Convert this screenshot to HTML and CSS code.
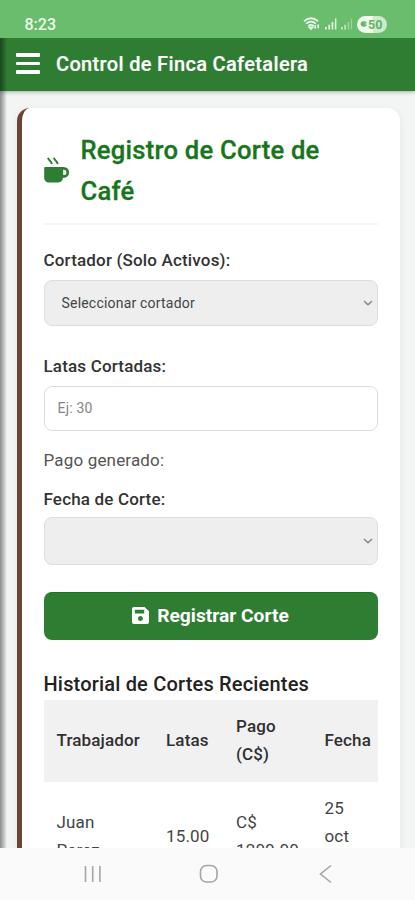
FILE: index.html
```html
<!DOCTYPE html>
<html lang="es">
<head>
<meta charset="utf-8">
<meta name="viewport" content="width=device-width, initial-scale=1">
<title>Control de Finca Cafetalera</title>
<link rel="stylesheet" href="styles.css">
</head>
<body>
<div class="phone">
  <div class="status">
    <span class="clock">8:23</span>
    <div class="status-icons">
      <svg class="wifi" width="18" height="14" viewBox="0 0 18 14" fill="none" stroke="#e9f8e6" stroke-width="1.8">
        <path d="M1 4.2Q8 -1.6 15 4.2M3.2 6.6Q8 2.6 12.8 6.6M5.4 9Q8 6.8 10.6 9"/><path d="M6.5 10.3L8 12L9.5 10.3Z" fill="#e9f8e6"/><path d="M12.2 11.8V8M15.2 7.5V11.3" stroke-width="1.7"/>
      </svg>
      <svg class="signal" width="12" height="12" viewBox="0 0 12 12" fill="#e3f5df"><path d="M0 9h1.7v2.5H0zM3.3 6.8H5v4.7H3.3zM6.6 4h1.7v7.5H6.6zM9.9 .5h1.5v11H9.9z"/></svg>
      <svg class="signal" width="12" height="12" viewBox="0 0 12 12" fill="#c5e8c1"><path d="M0 9h1.7v2.5H0zM3.3 6.8H5v4.7H3.3z"/><path d="M6.6 4h1.7v7.5H6.6zM9.9 .5h1.2v11H9.9z" opacity=".55"/></svg>
      <div class="battery"><svg width="7" height="8" viewBox="0 0 7 8"><path d="M3 1.2h2.5v1H7v1H5.5v1.5H7v1H5.5v1H3Q.5 6.2 .5 4T3 1.2z" fill="#67b76a"/></svg><span>50</span></div>
    </div>
  </div>
  <div class="app">
    <header class="topbar">
      <div class="menu"><i></i><i></i><i></i></div>
      <span class="brand">Control de Finca Cafetalera</span>
    </header>
    <main class="content">
      <section class="card">
        <div class="heading">
          <svg width="27" height="27" viewBox="0 0 27 27"><path d="M1 10h18.7a5.4 5.4 0 0 1 0 10.8h-.8a4.7 4.7 0 0 1-4.5 4.8H5A4.6 4.6 0 0 1 .2 21V10.8Q.2 10 1 10zM19.2 12.7v5.4h.5a2.7 2.7 0 0 0 0-5.4z" fill="#2e7d32" fill-rule="evenodd"/><path d="M4 .8Q4.3 2.4 5.9 3.7T7.8 7.2M9.9 .8Q10.2 2.4 11.8 3.7T13.7 7.2" fill="none" stroke="#2e7d32" stroke-width="1.9"/></svg>
          <h1>Registro de Corte de<br>Café</h1>
        </div>
        <form class="form">
          <label class="l-cortador">Cortador (Solo Activos):</label>
          <div class="field select"><span class="choice">Seleccionar cortador</span><svg width="10" height="6" viewBox="0 0 10 6"><path d="M1 1l4 3.7L9 1"/></svg></div>
          <label class="l-latas">Latas Cortadas:</label>
          <div class="field input"><span class="hint">Ej: 30</span></div>
          <p class="pay">Pago generado:</p>
          <label class="l-fecha">Fecha de Corte:</label>
          <div class="field select date"><svg width="10" height="6" viewBox="0 0 10 6"><path d="M1 1l4 3.7L9 1"/></svg></div>
          <div class="submit" role="button">
            <svg width="17" height="17" viewBox="0 0 17 17"><path fill="#fff" fill-rule="evenodd" d="M2 0h10.5L17 4.3V15a2 2 0 0 1-2 2H2a2 2 0 0 1-2-2V2a2 2 0 0 1 2-2zM2.8 2.8v3.7h9.4V2.8zM8.5 9a2.5 2.5 0 1 0 0 5 2.5 2.5 0 0 0 0-5z"/></svg>
            <span>Registrar Corte</span>
          </div>
        </form>
        <h2>Historial de Cortes Recientes</h2>
        <div class="table">
          <div class="row head"><span>Trabajador</span><span>Latas</span><span>Pago<br>(C$)</span><span>Fecha</span></div>
          <div class="row"><span>Juan<br>Perez</span><span>15.00</span><span>C$<br>1200.00</span><span class="when">25<br>oct</span></div>
        </div>
      </section>
    </main>
  </div>
  <nav class="navbar">
    <svg width="18" height="18" viewBox="0 0 18 18"><path d="M1.5 1v16M8.7 1v16M15.9 1v16"/></svg>
    <svg width="20" height="20" viewBox="0 0 20 20"><rect x="1.5" y="1.5" width="16.5" height="16.5" rx="6"/></svg>
    <svg width="13" height="20" viewBox="0 0 13 20"><path d="M12 1.5L1.5 10L12 18.5"/></svg>
  </nav>
</div>
</body>
</html>
```
FILE: styles.css
```css
* { box-sizing: border-box; }
body { margin: 0; font-family: Roboto, "Liberation Sans", sans-serif; color: #333; background: #f3f5f5; }
h1, h2, p { margin: 0; }
.phone { width: 415px; height: 900px; display: flex; flex-direction: column; overflow: hidden; }
.status { height: 38px; flex: none; background: #69bd6d; display: flex; justify-content: space-between; align-items: flex-start; padding: 15px 28px 0 24.5px; }
.clock { font-size: 16px; line-height: 19px; font-weight: 500; color: #eefbeb; }
.status-icons { display: flex; align-items: center; height: 18px; gap: 4px; }
.battery { width: 30px; height: 17px; border-radius: 9px; background: linear-gradient(90deg, #f0faee 52%, #cdeaca 52%); display: flex; align-items: center; padding-left: 3px; gap: 1px; font-size: 12.5px; font-weight: 700; color: #62b466; }
.app { height: 810px; flex: none; position: relative; overflow: hidden; }
.app::before { content: ""; position: absolute; z-index: 2; left: 0; top: 0; bottom: 0; width: 7px; background: linear-gradient(90deg, rgba(0,0,0,.43), rgba(0,0,0,.25) 45%, rgba(0,0,0,0)); }
.topbar { position: relative; height: 53px; background: #2e7d32; display: flex; align-items: center; padding: 0 16px 2px; gap: 16px; box-shadow: 0 1px 4px rgba(0,0,0,.3); }
.menu { width: 24px; display: flex; flex-direction: column; gap: 5px; }
.menu i { height: 3.4px; border-radius: 1px; background: #fff; }
.brand { font-size: 20px; font-weight: 500; letter-spacing: .34px; color: #fff; white-space: nowrap; -webkit-text-stroke: .2px #fff; }
.content { padding: 17px 15px 0 16.5px; }
.card { height: 820px; background: #fff; border-left: 5px solid #6d4332; border-radius: 13px; padding: 22px 22px 0 22px; box-shadow: 0 2px 8px rgba(0,0,0,.06); }
.heading { height: 95px; display: flex; gap: 10px; border-bottom: 2px solid #f5f5f5; }
.heading svg { margin-top: 27px; flex: none; }
h1 { font-size: 25.6px; line-height: 41px; font-weight: 500; letter-spacing: .24px; color: #17761c; white-space: nowrap; -webkit-text-stroke: .3px #17761c; }
.form { display: flex; flex-direction: column; }
label, .pay { font-size: 17px; line-height: 24px; white-space: nowrap; letter-spacing: .17px; }
label { font-weight: 500; }
.l-cortador { margin-top: 23px; }
.field { width: 334.5px; border: 1px solid #ddd; border-radius: 8px; display: flex; align-items: center; }
.select { height: 46px; margin-top: 8px; background: #eee; padding: 0 4px 1px 17px; }
.select svg { margin-left: auto; fill: none; stroke: #858585; stroke-width: 1.4; }
.choice { font-size: 14px; letter-spacing: .2px; color: #444; }
.l-latas { margin-top: 28px; }
.input { height: 45px; margin-top: 8px; padding: 0 0 1px 13px; background: #fff; }
.hint { font-size: 14px; letter-spacing: .2px; color: #858585; }
.pay { margin-top: 17px; color: #555; }
.l-fecha { margin-top: 15px; }
.date { height: 48px; margin-top: 6px; }
.submit { height: 48px; width: 334px; margin-top: 27px; border-radius: 8px; background: #2e7d32; border-top: 1px solid #17761c; display: flex; align-items: center; justify-content: center; gap: 8px; padding-bottom: 2px; color: #fff; font-size: 19.2px; font-weight: 700; }
h2 { font-size: 20px; line-height: 28px; font-weight: 500; letter-spacing: .18px; color: #222; margin-top: 30px; white-space: nowrap; }
.table { margin-top: 2px; width: 334px; }
.row { display: grid; grid-template-columns: 109.5px 70px 88.5px 54px; padding-left: 13px; align-items: center; font-size: 17px; line-height: 28px; letter-spacing: .15px; height: 108px; color: #444; }
.head { height: 82px; padding-bottom: 2px; background: #f1f1f1; font-weight: 500; color: #303030; }
.when { align-self: start; padding-top: 12px; }
.navbar { height: 52px; flex: none; background: #fafafa; display: flex; align-items: center; padding-left: 84px; }
.navbar svg { flex: none; fill: none; stroke: #a5a5a5; stroke-width: 1.6; }
.navbar svg:nth-child(2) { margin-left: 97px; }
.navbar svg:nth-child(3) { margin-left: 100px; }
```
